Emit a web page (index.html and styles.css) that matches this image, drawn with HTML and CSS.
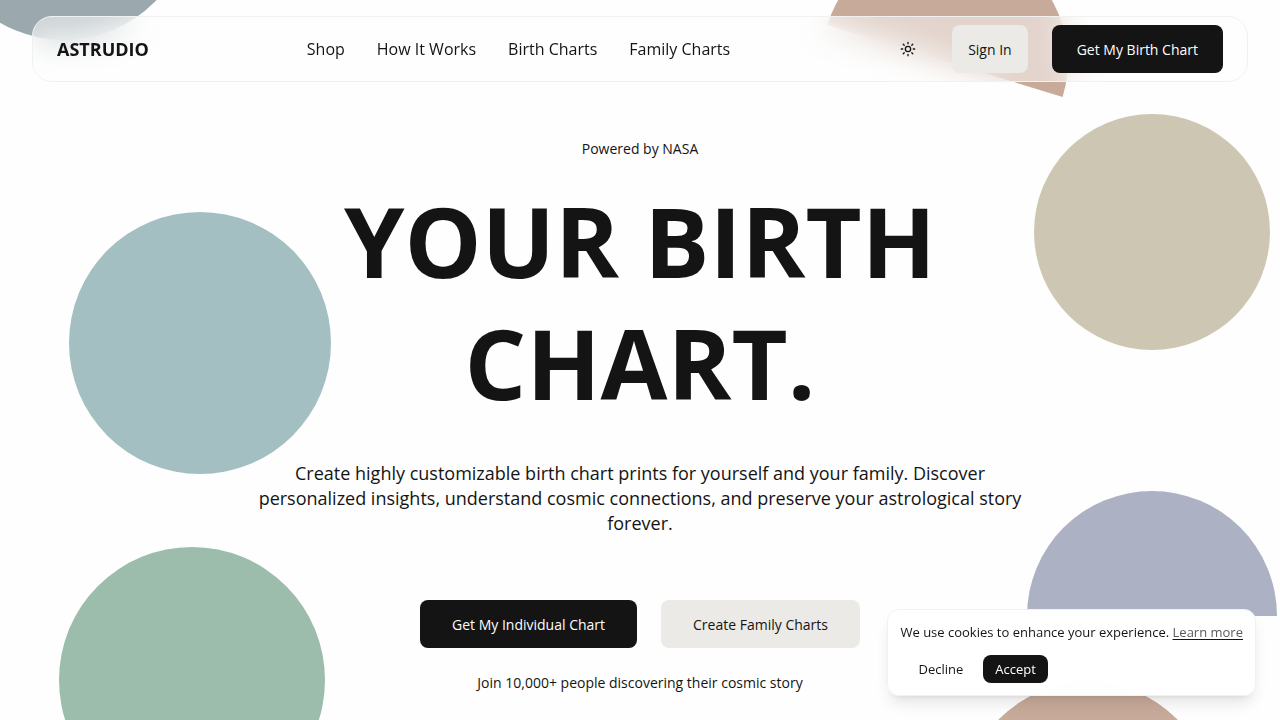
FILE: index.html
```html
<!DOCTYPE html>
<html lang="en">
<head>
  <meta charset="UTF-8" />
  <meta name="viewport" content="width=device-width, initial-scale=1.0" />
  <title>Astrudio</title>
  <link rel="stylesheet" href="styles.css">
</head>
<body>
  <svg class="shapes" viewBox="0 0 1280 720" preserveAspectRatio="xMidYMin slice" aria-hidden="true">
    <circle cx="64" cy="-87" r="127" fill="#9ba8ae" />
    <path d="M-123 0a123 123 0 0 1 246 0z" transform="translate(945 61) rotate(17)" fill="#c7aa9a" />
    <circle cx="1152" cy="232" r="118" fill="#cdc6b3" />
    <circle cx="200" cy="343" r="131" fill="#a4bfc1" />
    <circle cx="192" cy="680" r="133" fill="#9dbdac" />
    <path d="M1027 616a125 125 0 0 1 250 0z" fill="#acb2c4" />
    <circle cx="1088" cy="807" r="125" fill="#c7aa9a" />
  </svg>

  <header class="header">
    <a class="logo" href="#">ASTRUDIO</a>
    <nav class="nav">
      <a href="#shop">Shop</a>
      <a href="#how">How It Works</a>
      <a href="#birth">Birth Charts</a>
      <a href="#family">Family Charts</a>
    </nav>
    <div class="actions">
      <button class="theme" type="button" aria-label="Toggle theme">
        <svg width="16" height="16" viewBox="0 0 24 24" fill="none" stroke="currentColor" stroke-width="2" stroke-linecap="round">
          <circle cx="12" cy="12" r="4" />
          <path d="M12 2v2M12 20v2M4.9 4.9l1.4 1.4M17.7 17.7l1.4 1.4M2 12h2M20 12h2M6.3 17.7l-1.4 1.4M19.1 4.9l-1.4 1.4" />
        </svg>
      </button>
      <button class="btn btn-light btn-small" type="button">Sign In</button>
      <button class="btn btn-dark btn-medium" type="button">Get My Birth Chart</button>
    </div>
  </header>

  <main class="hero">
    <p class="powered">Powered by NASA</p>
    <h1>YOUR BIRTH CHART.</h1>
    <p class="lead">Create highly customizable birth chart prints for yourself and your family. Discover personalized insights, understand cosmic connections, and preserve your astrological story forever.</p>
    <div class="cta">
      <button class="btn btn-dark" type="button">Get My Individual Chart</button>
      <button class="btn btn-light" type="button">Create Family Charts</button>
    </div>
    <p class="join">Join 10,000+ people discovering their cosmic story</p>
  </main>

  <aside class="cookies">
    <p>We use cookies to enhance your experience. <a href="#cookies">Learn more</a></p>
    <div class="cookie-actions">
      <button class="chip" type="button">Decline</button>
      <button class="chip chip-dark" type="button">Accept</button>
    </div>
  </aside>
</body>
</html>
```
FILE: styles.css
```css
* {
  box-sizing: border-box;
}
body {
  margin: 0;
  min-height: 100vh;
  overflow-x: hidden;
  background-color: #fefefe;
  color: #141414;
  font-family: "Open Sans", sans-serif;
  font-size: 14px;
}
h1, p {
  margin: 0;
}
a {
  color: inherit;
  text-decoration: none;
}
button {
  font: inherit;
  color: inherit;
  border: none;
  cursor: pointer;
}
.shapes {
  position: absolute;
  inset: 0;
  width: 100%;
  height: 100%;
  z-index: -1;
}
.header {
  display: flex;
  align-items: center;
  justify-content: space-between;
  margin: 16px 32px 0;
  padding: 8px 24px;
  border: 1px solid #f1f1f0;
  border-radius: 20px;
  background-color: rgba(254, 254, 254, 0.5);
  backdrop-filter: blur(16px);
}
.logo {
  font-size: 18px;
  font-weight: 700;
}
.nav {
  display: flex;
  gap: 32px;
  font-size: 16px;
}
.actions {
  display: flex;
  align-items: center;
  gap: 24px;
}
.theme {
  display: flex;
  align-items: center;
  justify-content: center;
  width: 40px;
  height: 40px;
  padding: 0;
  background: none;
}
.btn {
  height: 48px;
  padding: 0 32px;
  border-radius: 8px;
}
.btn-dark {
  background-color: #141414;
  color: #fefefe;
}
.btn-light {
  background-color: #ebeae6;
}
.btn-small {
  padding: 0 16px;
}
.btn-medium {
  padding: 0 25px;
}
.hero {
  display: flex;
  flex-direction: column;
  align-items: center;
  max-width: 768px;
  margin: 0 auto;
  padding: 56px 0 24px;
  text-align: center;
}
.powered {
  line-height: 22px;
}
h1 {
  margin-top: 19px;
  font-size: 97px;
  font-weight: 700;
  line-height: 122px;
}
.lead {
  margin-top: 38px;
  font-size: 18px;
  line-height: 25px;
}
.cta {
  display: flex;
  gap: 24px;
  margin-top: 64px;
}
.join {
  margin-top: 24px;
  line-height: 22px;
}
.cookies {
  position: fixed;
  right: 24px;
  bottom: 24px;
  padding: 12px;
  border: 1px solid #f1f1f0;
  border-radius: 12px;
  background-color: rgba(255, 255, 255, 0.97);
  backdrop-filter: blur(16px);
  box-shadow: 0 10px 15px -3px rgba(0, 0, 0, 0.1), 0 4px 6px -4px rgba(0, 0, 0, 0.1);
  font-size: 13px;
  line-height: 20px;
}
.cookies a {
  color: #5a5a5a;
  text-decoration: underline;
  text-decoration-color: #141414;
  text-underline-offset: 2px;
}
.cookie-actions {
  display: flex;
  gap: 8px;
  margin-top: 13px;
  padding-left: 6px;
}
.chip {
  height: 28px;
  padding: 0 12px;
  border-radius: 8px;
  background: none;
}
.chip-dark {
  background-color: #141414;
  color: #fefefe;
}
```
